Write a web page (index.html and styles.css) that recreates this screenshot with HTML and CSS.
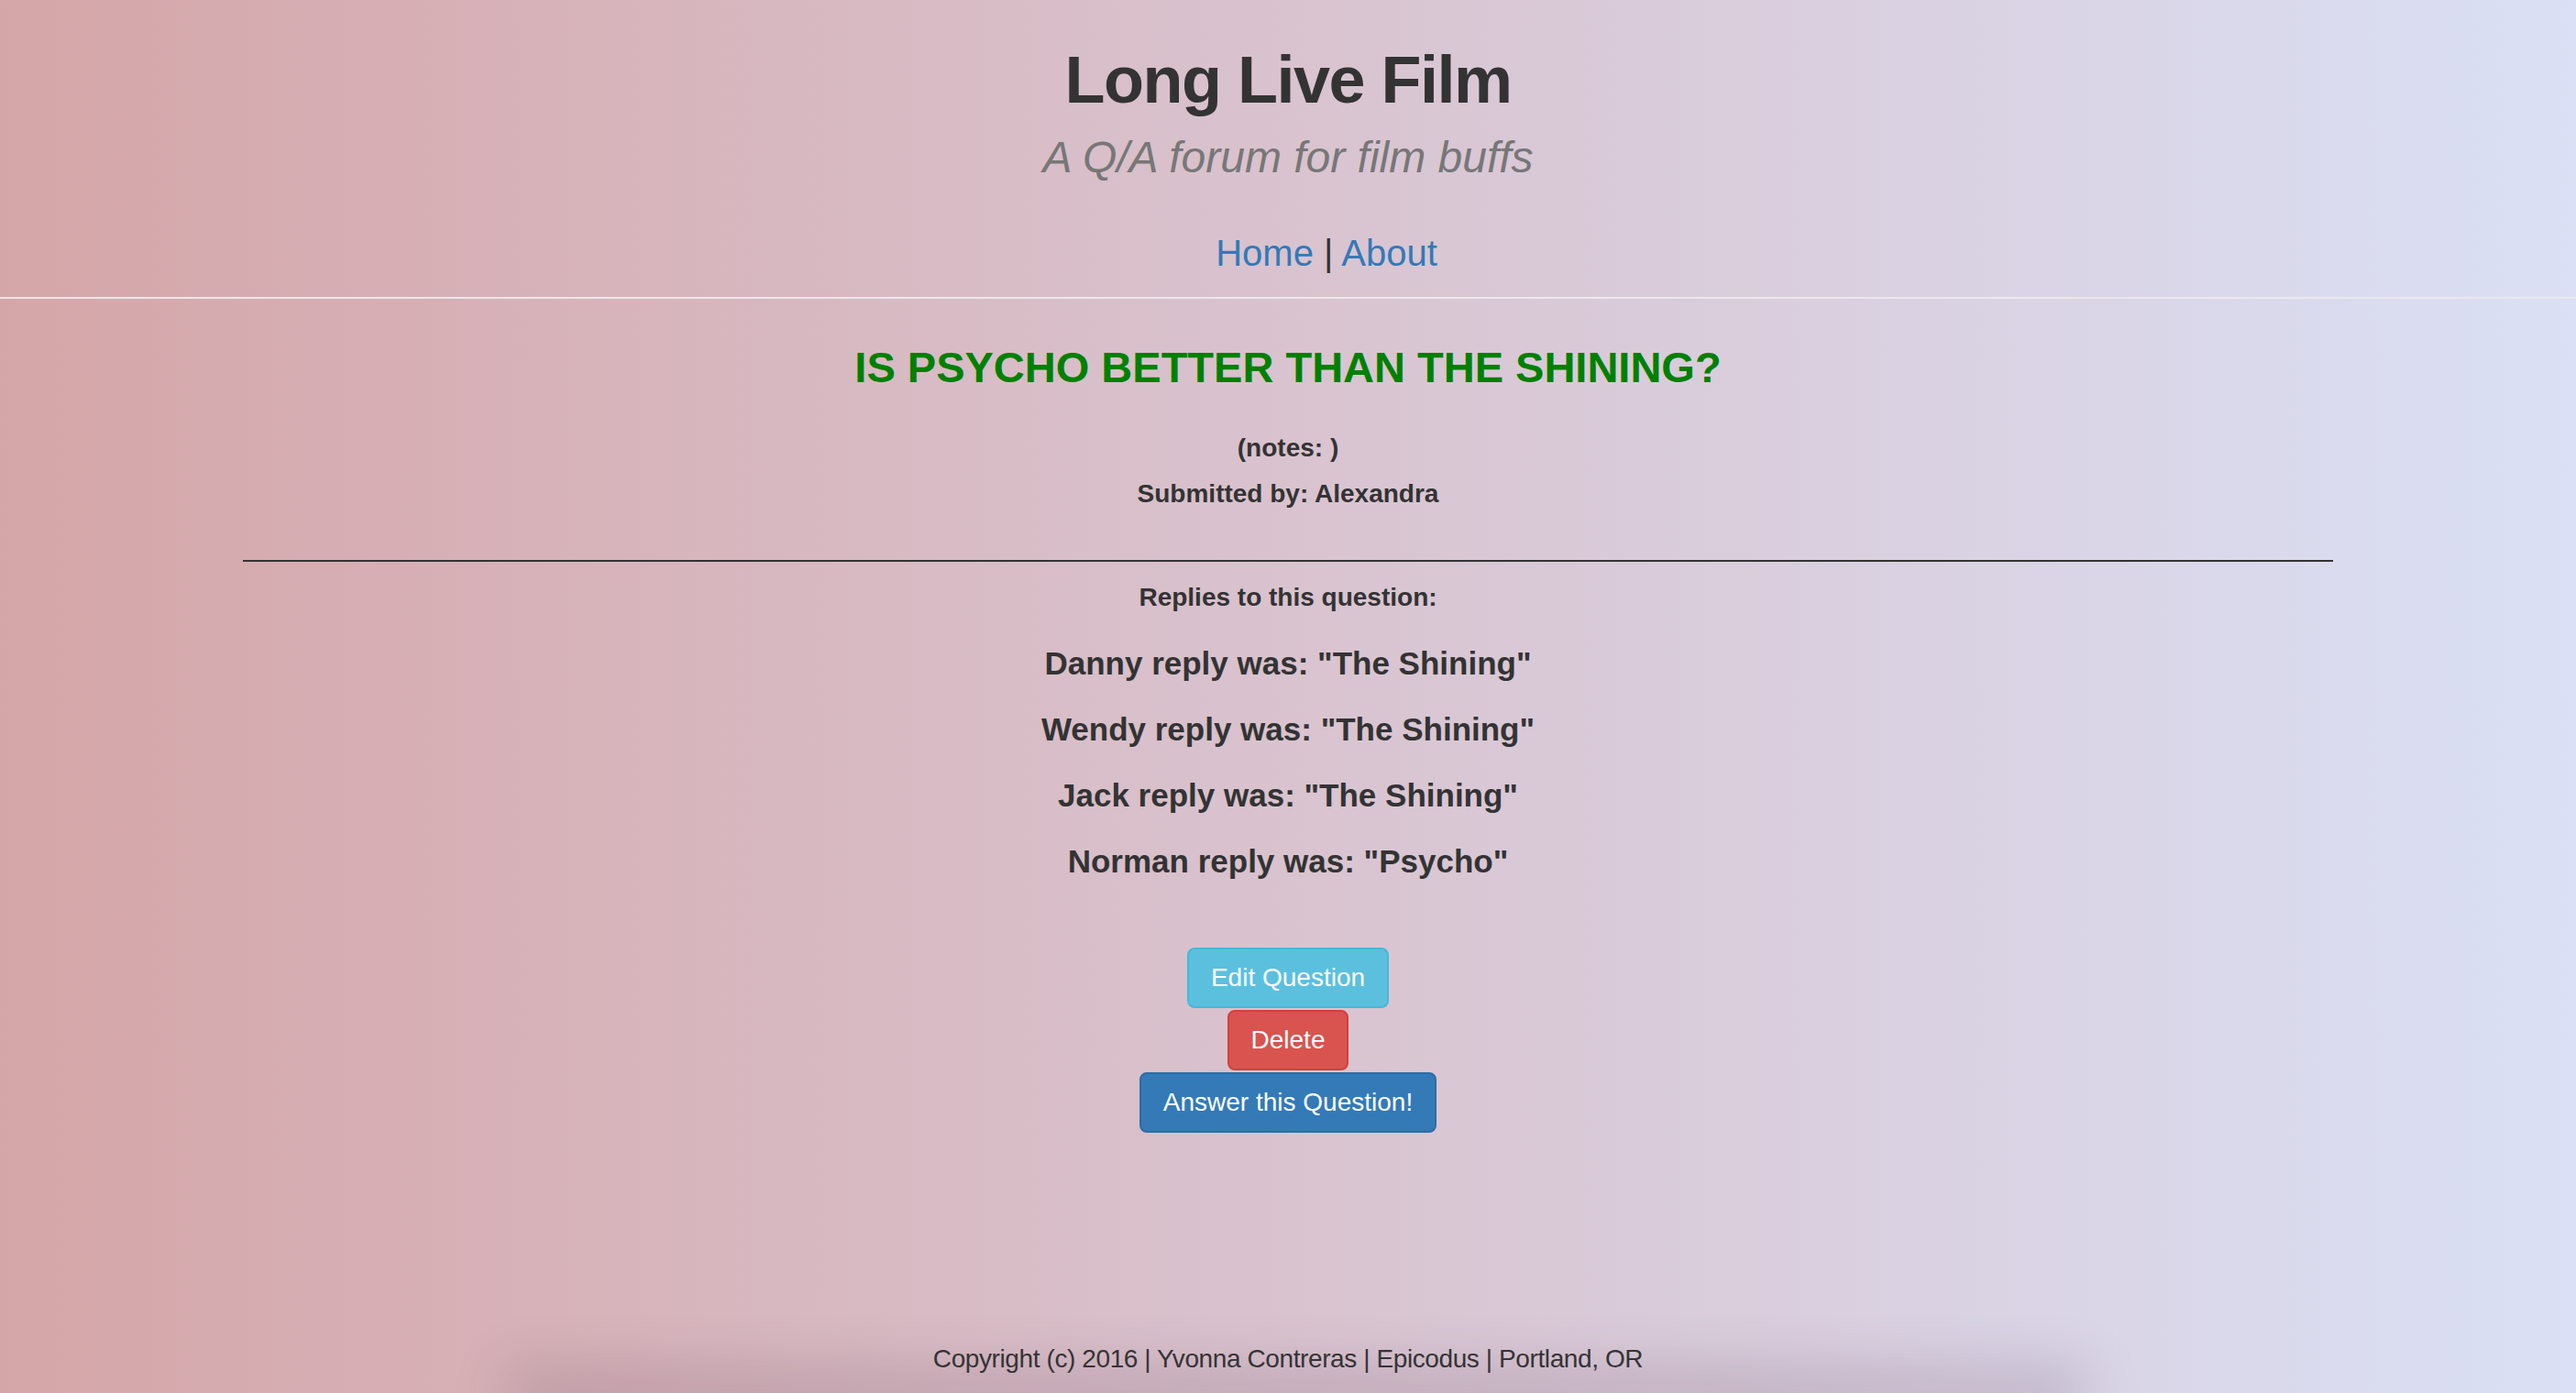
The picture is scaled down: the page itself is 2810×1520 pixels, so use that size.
FILE: index.html
```html
<!DOCTYPE html>
<html lang="en">
<head>
<meta charset="utf-8">
<title>Long Live Film</title>
<link rel="stylesheet" href="styles.css">
</head>
<body>
<div class="page">
  <header class="site-header">
    <h1 class="site-title">Long Live Film</h1>
    <h3 class="site-tagline">A Q/A forum for film buffs</h3>
    <nav class="site-nav"><a href="#">Home</a> | <a href="#">About</a></nav>
  </header>

  <main class="container">
    <h3 class="question-title">Is Psycho better than The Shining?</h3>
    <h5 class="meta notes">(notes: )</h5>
    <h5 class="meta submitted">Submitted by: Alexandra</h5>
    <hr class="divider">
    <h5 class="meta replies-label">Replies to this question:</h5>
    <ul class="replies">
      <li>Danny reply was: "The Shining"</li>
      <li>Wendy reply was: "The Shining"</li>
      <li>Jack reply was: "The Shining"</li>
      <li>Norman reply was: "Psycho"</li>
    </ul>
    <div class="actions">
      <button class="btn btn-info">Edit Question</button>
      <button class="btn btn-danger">Delete</button>
      <button class="btn btn-primary">Answer this Question!</button>
    </div>
  </main>

  <footer class="site-footer">
    <p>Copyright (c) 2016 | Yvonna Contreras | Epicodus | Portland, OR</p>
  </footer>
</div>
</body>
</html>
```

FILE: styles.css
```css
html, body {
  margin: 0;
  padding: 0;
  height: 100%;
  overflow: hidden;
}

body {
  font-family: "Liberation Sans", Arial, Helvetica, sans-serif;
  font-size: 28px;
  line-height: 1.42857;
  color: #333;
  background: linear-gradient(to right, #d5a6a8 0%, #d9c3cf 50%, #dae0f5 100%);
}

.page {
  position: relative;
  height: 100vh;
  display: flex;
  flex-direction: column;
}

.site-header {
  text-align: center;
  border-bottom: 2px solid #ece8eb;
  padding-bottom: 19px;
}

.site-title {
  margin: 48px 0 0;
  font-size: 72px;
  font-weight: 700;
  letter-spacing: -1.5px;
  line-height: 1.1;
  color: #333;
}

.site-tagline {
  margin: 19px 0 0;
  font-size: 48px;
  font-weight: 400;
  font-style: italic;
  line-height: 1.1;
  color: #777;
}

.site-nav {
  margin-top: 49px;
  padding-left: 84px;
  font-size: 40px;
  line-height: 57px;
  color: #333;
}

.site-nav a {
  color: #337ab7;
  text-decoration: none;
}

.container {
  width: 2280px;
  margin: 0 auto;
  text-align: center;
}

.question-title {
  margin: 49px 0 0;
  font-size: 47px;
  font-weight: 700;
  line-height: 1.1;
  color: #008000;
  text-transform: uppercase;
}

.meta {
  margin: 0;
  font-size: 28px;
  font-weight: 700;
  line-height: 40px;
  color: #333;
}

.notes {
  margin-top: 42px;
}

.submitted {
  margin-top: 10px;
}

.divider {
  margin: 52px 0 0;
  border: 0;
  border-top: 2px solid #333;
  height: 0;
}

.replies-label {
  margin-top: 19px;
}

.replies {
  list-style: none;
  margin: 32px 0 0;
  padding: 0;
  display: flex;
  flex-direction: column;
  gap: 32px;
}

.replies li {
  font-size: 35px;
  font-weight: 700;
  line-height: 40px;
}

.actions {
  margin-top: 74px;
  display: flex;
  flex-direction: column;
  align-items: center;
  gap: 2px;
}

.btn {
  font-family: "Liberation Sans", Arial, Helvetica, sans-serif;
  font-size: 28px;
  line-height: 38px;
  padding: 12px 24px;
  border: 2px solid transparent;
  border-radius: 8px;
  color: #fff;
  cursor: pointer;
}

.btn-info {
  background: #5bc0de;
  border-color: #46b8da;
}

.btn-danger {
  background: #d9534f;
  border-color: #d43f3a;
}

.btn-primary {
  background: #337ab7;
  border-color: #2e6da4;
}

.site-footer {
  margin-top: auto;
  text-align: center;
  padding-bottom: 17px;
}

.site-footer p {
  margin: 0;
  font-size: 28px;
  letter-spacing: -0.4px;
  line-height: 40px;
  color: #333;
}

.site-footer::after {
  content: "";
  position: absolute;
  left: 580px;
  right: 560px;
  bottom: 0;
  height: 0;
  box-shadow: 0 0 60px 26px rgba(90, 60, 80, 0.22);
}
```
